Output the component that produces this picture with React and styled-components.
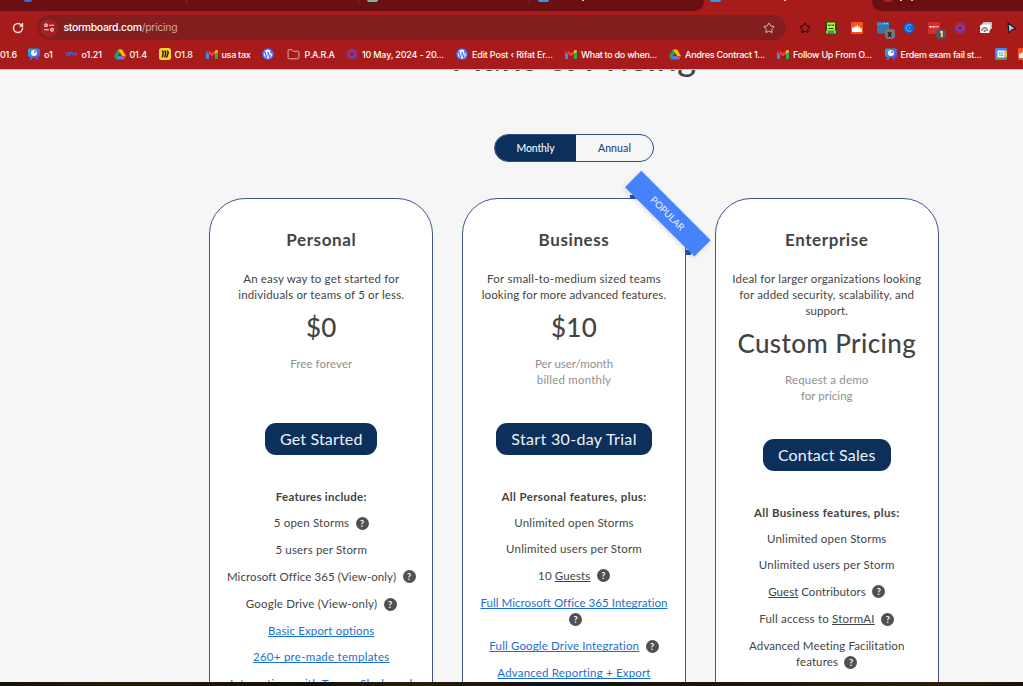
import React from 'react';
import styled, { createGlobalStyle, css } from 'styled-components';
import { RotateCw, Star, Folder } from 'lucide-react';
import { FaWordpress } from 'react-icons/fa';

const GlobalStyle = createGlobalStyle`
  * { box-sizing: border-box; }
  body { margin: 0; background: #f6f6f6; overflow: hidden; }
`;

const Screen = styled.div`
  width: 1023px;
  height: 686px;
  display: flex;
  flex-direction: column;
  overflow: hidden;
  font-family: Lato, "Open Sans", sans-serif;
  color: #444;
`;

/* ---------- browser chrome ---------- */
const Chrome = styled.header`
  flex: none;
  height: 70px;
  background: #a81b1b;
  color: #fff;
  font-family: Inter, Roboto, sans-serif;
  border-bottom: 1px solid #eab9b9;
`;
const TabStrip = styled.div`
  display: flex;
  height: 11px;
`;
const TabGroup = styled.div`
  display: flex;
  width: ${(p) => p.$width}px;
  height: 11px;
  background: ${(p) => (p.$active ? '#a81b1b' : '#6b1012')};
  border-radius: ${(p) => p.$radius || 0};
  overflow: hidden;
`;
const Tab = styled.div`
  width: ${(p) => p.$width}px;
  height: 3px;
  display: flex;
  padding-left: ${(p) => p.$pad || 8}px;
  border-right: ${(p) => (p.$line ? '1px solid #a02222' : 0)};
`;
const Sliver = styled.i`
  flex: none;
  width: ${(p) => p.$size || 11}px;
  height: 2px;
  border-radius: 0 0 3px 3px;
  background: ${(p) => p.$color};
`;
const Descender = styled.i`
  flex: none;
  width: 2px;
  height: 1px;
  margin-left: ${(p) => p.$gap}px;
  background: #e9c4c4;
`;
const Toolbar = styled.div`
  display: flex;
  align-items: center;
  height: 33px;
`;
const ReloadSlot = styled.div`
  flex: none;
  width: 37px;
  padding-left: 12px;
  display: flex;
`;
const AddressBar = styled.div`
  flex: none;
  width: 749px;
  height: 25px;
  border-radius: 13px;
  background: #831e1f;
  display: flex;
  align-items: center;
  padding: 0 11px 0 3px;
  margin-right: 6px;
`;
const SiteInfo = styled.span`
  width: 18px;
  height: 18px;
  border-radius: 50%;
  background: #a51f20;
  display: flex;
  align-items: center;
  justify-content: center;
  margin-right: 5.5px;
`;
const Url = styled.span`
  flex: 1;
  font-size: 10.4px;
  font-weight: 500;
  letter-spacing: -0.29px;
`;
const UrlPath = styled.span`
  color: #d3a5a5;
  font-weight: 400;
  letter-spacing: -0.26px;
`;
const Extension = styled.span`
  position: relative;
  flex: none;
  width: 25.9px;
  height: 20px;
  display: flex;
  align-items: center;
  justify-content: center;
`;
const Badge = styled.b`
  position: absolute;
  right: 1px;
  bottom: -1px;
  width: 10px;
  height: 10px;
  border-radius: 3px;
  background: ${(p) => p.$bg};
  color: ${(p) => p.$fg};
  font-size: 8px;
  line-height: 10px;
  text-align: center;
`;
const BookmarkBar = styled.nav`
  display: flex;
  height: 20px;
  align-items: center;
`;
const Bookmark = styled.a`
  flex: none;
  width: ${(p) => p.$width}px;
  display: flex;
  align-items: center;
  gap: ${(p) => p.$gap || 4}px;
  font-size: 9px;
  line-height: 13px;
  font-weight: 500;
  letter-spacing: ${(p) => p.$ls || 0}px;
  white-space: nowrap;
  svg { flex: none; }
`;

/* ---------- page ---------- */
const Page = styled.main`
  flex: none;
  height: 612px;
  overflow: hidden;
  background: #f6f6f6;
  display: flex;
  flex-direction: column;
  align-items: center;
  padding-left: 125px;
`;
const PageTitle = styled.h1`
  flex: none;
  margin: -34px 0 0;
  height: 44px;
  font-size: 36px;
  line-height: 42px;
  font-weight: 500;
  letter-spacing: 0.6px;
`;
const Toggle = styled.div`
  flex: none;
  display: flex;
  width: 160px;
  height: 28px;
  margin-top: 54px;
  border: 1px solid #2f4d80;
  border-radius: 14px;
  overflow: hidden;
`;
const ToggleOption = styled.button`
  flex: ${(p) => (p.$on ? '0 0 81px' : 1)};
  border: 0;
  padding: 0 0 1px 0;
  font: 500 10.5px Lato, sans-serif;
  letter-spacing: ${(p) => (p.$on ? -0.12 : 0.12)}px;
  background: ${(p) => (p.$on ? '#0c305b' : 'transparent')};
  color: ${(p) => (p.$on ? '#f2f5f9' : '#24467a')};
`;
const Plans = styled.section`
  flex: none;
  display: flex;
  gap: 28.75px;
  margin-top: 36px;
  align-items: stretch;
  height: 560px;
`;
const Card = styled.article`
  position: relative;
  width: 224px;
  padding: 29px 0 0;
  border: 1px solid #41558d;
  border-radius: 36px;
  background: #fff;
  text-align: center;
  display: flex;
  flex-direction: column;
  align-items: center;
  white-space: nowrap;
`;
const PlanName = styled.h2`
  margin: 0 0 19px;
  font-size: 17px;
  line-height: 24px;
  font-weight: 700;
  letter-spacing: 0.6px;
`;
const bodyText = css`
  font-size: 11.5px;
  line-height: 16px;
`;
const Description = styled.div`
  ${bodyText}
`;
const Line = styled.div`
  letter-spacing: ${(p) => p.$ls || 0}px;
`;
const Price = styled.div`
  margin-top: 7.5px;
  font-size: 26px;
  line-height: 32px;
  font-weight: 500;
  letter-spacing: ${(p) => p.$ls || 0}px;
`;
const Terms = styled.div`
  ${bodyText}
  margin-top: 13.5px;
  height: 32px;
  color: #8f8f8f;
`;
const CallToAction = styled.button`
  flex: none;
  margin: 35px 0 33.5px;
  width: ${(p) => p.$width}px;
  height: 32px;
  padding: 0 0 2px;
  border: 0;
  border-radius: 11px;
  background: #0c305b;
  color: #eef3f8;
  font: 400 16px Lato, sans-serif;
  letter-spacing: ${(p) => p.$ls}px;
`;
const FeatureTitle = styled.strong`
  ${bodyText}
  font-weight: 700;
  letter-spacing: ${(p) => p.$ls}px;
`;
const FeatureList = styled.ul`
  ${bodyText}
  list-style: none;
  margin: 10.3px 0 0;
  padding: 0;
  display: flex;
  flex-direction: column;
  gap: 10.3px;
`;
const Feature = styled.li``;
const FeatureLine = styled.div`
  display: flex;
  justify-content: center;
  align-items: center;
  height: ${(p) => (p.$help ? 17 : 16)}px;
  letter-spacing: ${(p) => p.$ls || 0}px;
  white-space: pre;
`;
const Link = styled.a`
  color: ${(p) => (p.$plain ? 'inherit' : '#1a6fd0')};
  text-decoration: underline;
  text-underline-offset: 1.2px;
  text-decoration-thickness: 1px;
  text-decoration-skip-ink: none;
`;
const Help = styled.span`
  width: 13px;
  height: 13px;
  margin-left: ${(p) => (p.$alone ? 3 : 6.5)}px;
  border-radius: 50%;
  background: #505050;
  color: #fff;
  font: 700 9px/13px Lato, sans-serif;
  letter-spacing: 0;
  text-align: center;
`;
const Ribbon = styled.div`
  position: absolute;
  left: 155.5px;
  top: 2.8px;
  width: 97.5px;
  height: 22.8px;
  transform: rotate(45deg);
  background: #4782fd;
  color: #e9f0ff;
  font-size: 9.4px;
  line-height: 23px;
  letter-spacing: 0.1px;
  font-weight: 400;
  text-align: center;
  box-shadow: 0 2px 5px rgba(0, 0, 0, 0.14);
`;
const Fold = styled.i`
  position: absolute;
  left: ${(p) => p.$x}px;
  top: ${(p) => p.$y}px;
  width: 5px;
  height: 4.5px;
  background: #2b56ae;
`;
const DesktopEdge = styled.footer`
  flex: none;
  height: 4px;
  background: linear-gradient(90deg, #15110b, #241a08 12%, #120f0b 30%, #271c07 40%, #14110c 55%, #1d1609 75%, #2a1e08 92%, #171208);
`;

/* ---------- icons ---------- */
const Gmail = () => (
  <svg width="12" height="9" viewBox="0 0 24 18">
    <path d="M0 3v13a2 2 0 0 0 2 2h4V7z" fill="#4285f4" />
    <path d="M24 3v13a2 2 0 0 1-2 2h-4V7z" fill="#34a853" />
    <path d="M18 2v6l6-4.500V3c0-3-3-3.800-5-2.200z" fill="#fbbc04" />
    <path d="M6 8V1.600L12 6l6-4.400V8l-6 4.500z" fill="#ea4335" />
    <path d="M0 3v.5L6 8V1.600L5 .8C3-.8 0 0 0 3z" fill="#c5221f" />
  </svg>
);
const Drive = () => (
  <svg width="12" height="11" viewBox="0 0 24 22">
    <path d="M8 1h8l-4 7-8 13-4-7z" fill="#20a464" />
    <path d="M8 1h8l8 13h-8z" fill="#fbbc04" />
    <path d="M8 14h16l-4 7H4z" fill="#4285f4" />
    <path d="M16 14h8l-4 7z" fill="#ea4335" />
    <path d="M12 8l4 6H8z" fill="#a81b1b" />
  </svg>
);
const PresentBoard = () => (
  <svg width="12" height="12" viewBox="0 0 24 24">
    <defs>
      <linearGradient id="board" x1="0" y1="0" x2="1" y2="1">
        <stop offset="0" stopColor="#12bfe0" />
        <stop offset="1" stopColor="#7430e8" />
      </linearGradient>
    </defs>
    <path d="M3 1h18a3 3 0 0 1 3 3v11a3 3 0 0 1-3 3h-2l2 6h-4l-2-4H9l-2 4H3l2-6H3a3 3 0 0 1-3-3V4a3 3 0 0 1 3-3z" fill="url(#board)" />
    <circle cx="12" cy="10" r="6" fill="#fff" />
    <path d="M12 5v5h5a5 5 0 0 0-5-5z" fill="#5ca2f4" />
  </svg>
);
const Burst = ({ size = 12, color = '#6b4be0' }) => (
  <svg width={size} height={size} viewBox="0 0 24 24" stroke={color} strokeWidth="2" strokeLinecap="round" fill="none">
    <circle cx="12" cy="12" r="5.500" />
    {Array.from({ length: 12 }, (_, i) => (
      <path key={i} d="M12 1v5" transform={`rotate(${i * 30} 12 12)`} />
    ))}
  </svg>
);
const Wordpress = () => (
  <svg width="12" height="12" viewBox="0 0 24 24">
    <circle cx="12" cy="12" r="12" fill="#3858e9" />
    <FaWordpress x="2" y="2" width="20" height="20" size="20" color="#fff" />
  </svg>
);
const LinkedRings = () => (
  <svg width="12" height="6" viewBox="0 0 24 12" fill="none" stroke="#4568d8" strokeWidth="2.400">
    <circle cx="4" cy="6" r="3" />
    <path d="M9 9V5c0-3 5-3 5 0v4M16 6h7M19 3v6" />
  </svg>
);
const Miro = () => (
  <svg width="12" height="12" viewBox="0 0 24 24">
    <rect width="24" height="24" rx="5" fill="#ffd02f" />
    <path d="M5 5h3l2 4-2 10H5l2-9zM10 5h3l2 4-2 10h-3l2-9zM15 5h3l2 4-3 10h-3l3-10z" fill="#1c1508" />
  </svg>
);
const Calendar = () => (
  <svg width="12" height="12" viewBox="0 0 24 24">
    <rect width="24" height="24" rx="2.500" fill="#4285f4" />
    <path d="M19 5h5v14h-5z" fill="#fbbc04" />
    <path d="M0 19h19v5H2a2 2 0 0 1-2-2z" fill="#34a853" />
    <path d="M19 19h5l-5 5z" fill="#ea4335" />
    <path d="M5 5h14v14H5z" fill="#fff" />
    <path d="M8 9.500l2-1V16M12.500 9.500c2-2 4.500 0 3 2L12.500 15.500h4" stroke="#3b78e7" strokeWidth="1.600" fill="none" />
  </svg>
);
const Flame = () => (
  <svg width="12" height="12" viewBox="0 0 24 24">
    <rect width="24" height="24" rx="2" fill="#f4511e" />
    <path d="M2 20v-8l2-2 2 3 2-6 2 4 3-7 2 7 2-3 2 5 2-2 1 9z" fill="#fff" />
  </svg>
);
const SettingsGlyph = () => (
  <svg width="10" height="9" viewBox="0 0 20 18" fill="none" stroke="#f3dede" strokeWidth="2.200" strokeLinecap="round">
    <circle cx="4" cy="4.500" r="2.700" />
    <path d="M11 4.500h8M1 13.500h8" />
    <circle cx="16" cy="13.500" r="2.700" />
  </svg>
);
const GreenBot = () => (
  <svg width="12" height="14" viewBox="0 0 24 28">
    <path d="M2 1h20v4h2v22H0V5h2z" fill="#1f4a16" />
    <path d="M4 3h16v16H4z" fill="#b4f03c" />
    <path d="M2 19h20v6H2z" fill="#8ede4a" />
    <path d="M6 7h3v3H6zM11 7h2v3h-2zM15 7h3v3h-3zM7 14h10v2H7zM6 21h12v2H6z" fill="#26401a" />
  </svg>
);
const Windows = () => (
  <svg width="12" height="12" viewBox="0 0 24 24">
    <path d="M0 1h24v22H0z" fill="#3a76a8" />
    <path d="M0 1h24v5H0z" fill="#2d94d8" />
    <path d="M14 2h2v2h-2zM19 2h2v2h-2z" fill="#d5efff" />
  </svg>
);
const BlueC = () => (
  <svg width="12" height="12" viewBox="0 0 24 24" fill="none">
    <path d="M12 0l8 3.500 4 8.500-4 8.500-8 3.500-8-3.500L0 12l4-8.500z" fill="#1559d8" />
    <path d="M17 7.500a6.300 6.300 0 1 0 0 9" stroke="#22b7f2" strokeWidth="2.600" />
    <circle cx="13" cy="12" r="2" fill="#22b7f2" />
  </svg>
);
const RedDots = () => (
  <svg width="12" height="12" viewBox="0 0 24 24">
    <rect width="24" height="24" rx="3" fill="#d32f2f" />
    <path d="M3 8h4v3H3zM9 8h4v3H9zM15 8h2v3h-2zM19 8h2v3h-2z" fill="#fff" />
  </svg>
);
const Snapshots = () => (
  <svg width="12" height="11" viewBox="0 0 24 22">
    <rect x="6" y="0" width="18" height="14" rx="2" fill="#b9c3bd" />
    <rect x="3" y="3" width="18" height="14" rx="2" fill="#dfe5e2" />
    <rect x="0" y="6" width="19" height="16" rx="2" fill="#fff" />
    <path d="M4 18a5.500 5.500 0 0 1 9-5" fill="none" stroke="#ea4335" strokeWidth="3" />
    <path d="M12 13a5 5 0 0 1 3 5" fill="none" stroke="#34a853" strokeWidth="3" />
    <circle cx="9.500" cy="18" r="2.500" fill="#4285f4" />
  </svg>
);
const Pointer = () => (
  <svg width="10" height="12" viewBox="0 0 20 24">
    <path d="M2 2l16 12-8 1-6 7z" fill="#a9cdf4" stroke="#10151d" strokeWidth="2.200" strokeLinejoin="round" />
  </svg>
);

/* ---------- data ---------- */
const bookmarks = [
  { label: '01.6', width: 29, ls: -0.2, start: true },
  { icon: <PresentBoard />, label: 'o1', width: 37.5, ls: -0.2 },
  { icon: <LinkedRings />, label: 'o1.21', width: 48, ls: -0.1 },
  { icon: <Drive />, label: '01.4', width: 45, ls: -0.2 },
  { icon: <Miro />, label: 'O1.8', width: 47, ls: -0.1 },
  { icon: <Gmail />, label: 'usa tax', width: 56.5, ls: -0.3 },
  { icon: <Wordpress />, width: 24.5 },
  { icon: <Folder size={13} strokeWidth={1.7} color="#e5bcbc" />, label: 'P.A.R.A', width: 59.5, ls: -0.3, gap: 5 },
  { icon: <Burst />, label: '10 May, 2024 - 20...', width: 110, ls: -0.2 },
  { icon: <Wordpress />, label: 'Edit Post ‹ Rifat Er...', width: 109, ls: -0.17 },
  { icon: <Gmail />, label: 'What to do when...', width: 104, ls: -0.28 },
  { icon: <Drive />, label: 'Andres Contract 1...', width: 108, ls: -0.25 },
  { icon: <Gmail />, label: 'Follow Up From O...', width: 107.5, ls: -0.24 },
  { icon: <PresentBoard />, label: 'Erdem exam fail st...', width: 110, ls: -0.29 },
  { icon: <Calendar />, width: 23 },
  { icon: <Flame />, width: 12 },
];

const extensions = [
  { icon: <Star size={12} strokeWidth={2} color="#1e0505" /> },
  { icon: <GreenBot /> },
  { icon: <Flame /> },
  { icon: <Windows />, badge: 'x', bg: '#777', fg: '#111' },
  { icon: <BlueC /> },
  { icon: <RedDots />, badge: '1', bg: '#555', fg: '#fff' },
  { icon: <Burst /> },
  { icon: <Snapshots /> },
  { icon: <Pointer /> },
];

const plans = [
  {
    name: 'Personal',
    lines: [['An easy way to get started for', 0.17], ['individuals or teams of 5 or less.', 0.16]],
    price: ['$0', 0.1],
    terms: [['Free forever', 0.06]],
    cta: ['Get Started', 0.16, 112],
    title: ['Features include:', 0.25],
    features: [
      [{ text: '5 open Storms', ls: 0.16, help: true }],
      [{ text: '5 users per Storm', ls: 0.17 }],
      [{ text: 'Microsoft Office 365 (View-only)', ls: 0.08, help: true }],
      [{ text: 'Google Drive (View-only)', ls: 0.19, help: true }],
      [{ link: 'Basic Export options', ls: 0.14 }],
      [{ link: '260+ pre-made templates', ls: 0.26 }],
      [{ link: 'Integrations with Teams, Slack, and', ls: 0.21 }],
    ],
  },
  {
    name: 'Business',
    popular: true,
    lines: [['For small-to-medium sized teams', 0.24], ['looking for more advanced features.', 0.11]],
    price: ['$10', 0.3],
    terms: [['Per user/month', -0.02], ['billed monthly', 0.21]],
    cta: ['Start 30-day Trial', 0.34, 156],
    title: ['All Personal features, plus:', 0.37],
    features: [
      [{ text: 'Unlimited open Storms', ls: 0.19 }],
      [{ text: 'Unlimited users per Storm', ls: 0.19 }],
      [{ text: '10 ', plain: 'Guests', ls: 0.13, help: true }],
      [{ link: 'Full Microsoft Office 365 Integration', ls: 0.05 }, { help: true, alone: true }],
      [{ link: 'Full Google Drive Integration', ls: 0.15, help: true }],
      [{ link: 'Advanced Reporting + Export', ls: 0.18 }],
    ],
  },
  {
    name: 'Enterprise',
    lines: [
      ['Ideal for larger organizations looking', 0.17],
      ['for added security, scalability, and', 0.15],
      ['support.', 0.08],
    ],
    price: ['Custom Pricing', 0.38],
    terms: [['Request a demo', 0.18], ['for pricing', 0.04]],
    cta: ['Contact Sales', 0.19, 128],
    title: ['All Business features, plus:', 0.37],
    features: [
      [{ text: 'Unlimited open Storms', ls: 0.19 }],
      [{ text: 'Unlimited users per Storm', ls: 0.19 }],
      [{ plain: 'Guest', after: ' Contributors', ls: 0.03, help: true }],
      [{ text: 'Full access to ', plain: 'StormAI', ls: 0.2, help: true }],
      [{ text: 'Advanced Meeting Facilitation', ls: 0.1 }, { text: 'features', ls: 0.11, help: true }],
    ],
  },
];

function Plan({ plan }) {
  return (
    <Card>
      <PlanName>{plan.name}</PlanName>
      <Description>
        {plan.lines.map(([text, ls]) => <Line key={text} $ls={ls}>{text}</Line>)}
      </Description>
      <Price $ls={plan.price[1]}>{plan.price[0]}</Price>
      <Terms>
        {plan.terms.map(([text, ls]) => <Line key={text} $ls={ls}>{text}</Line>)}
      </Terms>
      <CallToAction $ls={plan.cta[1]} $width={plan.cta[2]}>{plan.cta[0]}</CallToAction>
      <FeatureTitle $ls={plan.title[1]}>{plan.title[0]}</FeatureTitle>
      <FeatureList>
        {plan.features.map((lines, i) => (
          <Feature key={i}>
            {lines.map((l, j) => (
              <FeatureLine key={j} $ls={l.ls} $help={l.help}>
                {l.text}
                {l.link && <Link>{l.link}</Link>}
                {l.plain && <Link $plain>{l.plain}</Link>}
                {l.after}
                {l.help && <Help $alone={l.alone}>?</Help>}
              </FeatureLine>
            ))}
          </Feature>
        ))}
      </FeatureList>
      {plan.popular && (
        <>
          <Fold $x={167} $y={-4.5} />
          <Fold $x={222.5} $y={51} />
          <Ribbon>POPULAR</Ribbon>
        </>
      )}
    </Card>
  );
}

export default function App() {
  return (
    <Screen>
      <GlobalStyle />
      <Chrome>
        <TabStrip>
          <TabGroup $width={704} $radius="0 0 9px 0">
            <Tab $width={187} $pad={24} $line><Sliver $color="#3f68dc" $size={8} /></Tab>
            <Tab $width={172} $line />
            <Tab $width={171} $line><Sliver $color="#7fb0a5" /></Tab>
            <Tab $width={174}><Sliver $color="#3399e6" /><Descender $gap={33} /></Tab>
          </TabGroup>
          <TabGroup $width={168} $active>
            <Tab $width={168} $pad={6}><Sliver $color="#3399e6" /><Descender $gap={63} /></Tab>
          </TabGroup>
          <TabGroup $width={151} $radius="0 0 0 9px">
            <Tab $width={151} $pad={12}><Sliver $color="#b3202a" $size={8} /><Descender $gap={8} /><Descender $gap={9} /></Tab>
          </TabGroup>
        </TabStrip>
        <Toolbar>
          <ReloadSlot><RotateCw size={12} strokeWidth={2.8} color="#f5e3e3" /></ReloadSlot>
          <AddressBar>
            <SiteInfo><SettingsGlyph /></SiteInfo>
            <Url>stormboard.com<UrlPath>/pricing</UrlPath></Url>
            <Star size={12} strokeWidth={2} color="#d9c3c3" />
          </AddressBar>
          {extensions.map((e, i) => (
            <Extension key={i}>
              {e.icon}
              {e.badge && <Badge $bg={e.bg} $fg={e.fg}>{e.badge}</Badge>}
            </Extension>
          ))}
        </Toolbar>
        <BookmarkBar>
          {bookmarks.map((b, i) => (
            <Bookmark key={i} $width={b.width - (b.start ? 1 : 0)} $ls={b.ls} $gap={b.gap}>
              {b.icon}
              {b.label}
            </Bookmark>
          ))}
        </BookmarkBar>
      </Chrome>
      <Page>
        <PageTitle>Plans &amp; Pricing</PageTitle>
        <Toggle>
          <ToggleOption $on>Monthly</ToggleOption>
          <ToggleOption>Annual</ToggleOption>
        </Toggle>
        <Plans>
          {plans.map((p) => <Plan key={p.name} plan={p} />)}
        </Plans>
      </Page>
      <DesktopEdge />
    </Screen>
  );
}
